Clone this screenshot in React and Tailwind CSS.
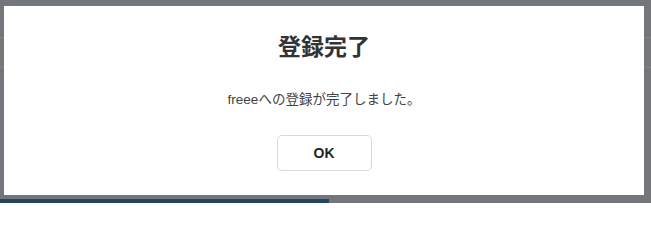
export default function App() {
  return (
    <div className="relative h-[203px] w-[651px] overflow-hidden bg-[#73777b] font-['Liberation_Sans','Noto_Sans_CJK_JP',sans-serif]">
      {/* page behind the overlay */}
      <div className="flex h-full flex-col">
        <div className="h-[37px]" />
        <div className="h-[31px] border-y border-[#81858a] bg-[#77787a]" />
        <div className="flex-1" />
        <div className="h-[4px] w-[329px] bg-[#234560]" />
      </div>

      {/* modal */}
      <div className="absolute inset-0 pl-[4px] pt-[6px]">
        <div className="flex h-[189px] w-[640px] flex-col items-center bg-white pt-[25px]">
          <h2 className="text-[23px] leading-[33px] font-bold text-[#333333]">登録完了</h2>
          <p className="mt-[26px] text-[13.5px] leading-[20px] text-[#444444]">freeeへの登録が完了しました。</p>
          <button className="mt-[25px] h-[36px] w-[95px] rounded-[5px] border border-[#d9d9d9] bg-white text-[14px] font-bold text-[#222222]">
            OK
          </button>
        </div>
      </div>
    </div>
  );
}
